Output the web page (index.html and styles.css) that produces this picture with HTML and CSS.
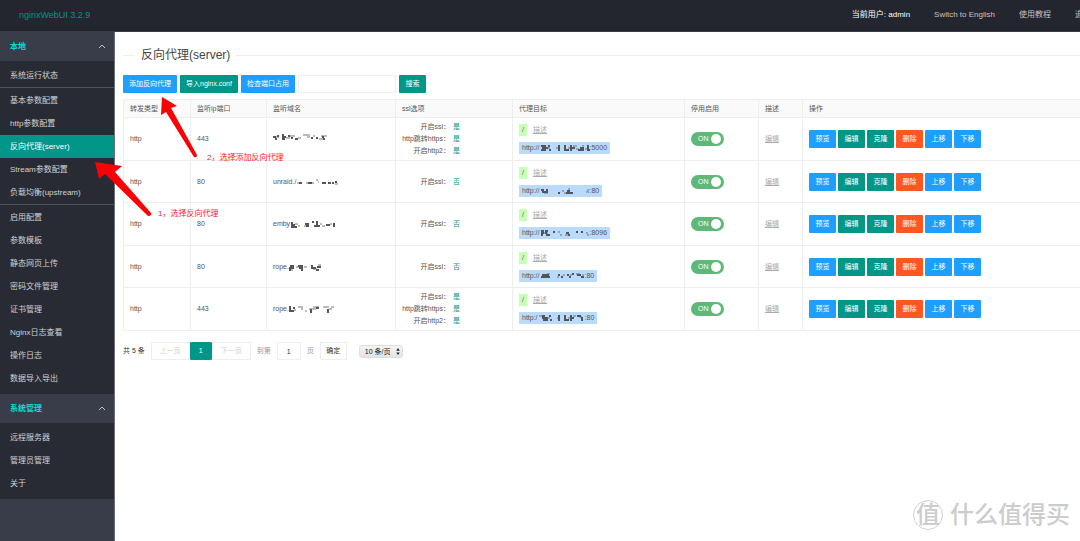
FILE: index.html
```html
<!DOCTYPE html>
<html lang="zh">
<head>
<meta charset="utf-8">
<title>nginxWebUI</title>
<link rel="stylesheet" href="styles.css">
</head>
<body>
<header class="topbar">
  <a class="logo" href="#">nginxWebUI 3.2.9</a>
  <nav class="topnav">
    <a class="user" href="#">当前用户: admin</a>
    <a href="#">Switch to English</a>
    <a href="#">使用教程</a>
    <a href="#">退出登录</a>
  </nav>
</header>
<div class="layout">
  <nav class="sidebar">
    <button class="group">本地<svg class="chevron" viewBox="0 0 8 5"><path d="M1 4l3-3 3 3"/></svg></button>
    <ul class="menu">
      <li><a href="#">系统运行状态</a></li>
      <li class="split"><a href="#">基本参数配置</a></li>
      <li><a href="#">http参数配置</a></li>
      <li><a class="active" href="#">反向代理(server)</a></li>
      <li><a href="#">Stream参数配置</a></li>
      <li><a href="#">负载均衡(upstream)</a></li>
      <li class="split"><a href="#">启用配置</a></li>
      <li><a href="#">参数模板</a></li>
      <li><a href="#">静态网页上传</a></li>
      <li><a href="#">密码文件管理</a></li>
      <li><a href="#">证书管理</a></li>
      <li><a href="#">Nginx日志查看</a></li>
      <li><a href="#">操作日志</a></li>
      <li><a href="#">数据导入导出</a></li>
    </ul>
    <button class="group">系统管理<svg class="chevron" viewBox="0 0 8 5"><path d="M1 4l3-3 3 3"/></svg></button>
    <ul class="menu">
      <li><a href="#">远程服务器</a></li>
      <li><a href="#">管理员管理</a></li>
      <li><a href="#">关于</a></li>
    </ul>
  </nav>
  <main class="content">
    <fieldset class="heading"><legend>反向代理(server)</legend></fieldset>
    <form class="toolbar">
      <button type="button" class="btn blue">添加反向代理</button>
      <button type="button" class="btn teal">导入nginx.conf</button>
      <button type="button" class="btn blue">检查端口占用</button>
      <input class="field search" type="text" aria-label="搜索">
      <button type="button" class="btn teal">搜索</button>
    </form>
    <table class="grid">
      <colgroup><col class="c-type"><col class="c-port"><col class="c-domain"><col class="c-ssl"><col class="c-target"><col class="c-state"><col class="c-desc"><col></colgroup>
      <thead>
        <tr><th>转发类型</th><th>监听ip端口</th><th>监听域名</th><th>ssl选项</th><th>代理目标</th><th>停用启用</th><th>描述</th><th>操作</th></tr>
      </thead>
      <tbody>
        <tr>
          <td>http</td><td>443</td>
          <td><span class="masked"><svg class="mask" width="54" height="8" viewBox="0 0 54 8"><path class="dark" d="M0 4h3M2 6h2M4 3h2M9 2h2M9 4h4M9 6h3M15 3h2M18 5h2M22 6h3M38 5h2M43 5h2M49 4h2M50 6h2"/><path class="pale" d="M3 4h3M13 5h4M17 3h5M25 5h3M30 2h7M34 4h3M40 3h2M46 6h4M48 3h6"/></svg></span></td>
          <td><dl class="ssl"><dt>开启ssl：</dt><dd>是</dd><dt>http跳转https：</dt><dd>是</dd><dt>开启http2：</dt><dd>是</dd></dl></td>
          <td><div class="target"><span class="path">/</span><a class="note" href="#">描述</a></div><div class="target"><span class="url">http://<svg class="mask" width="50" height="8" viewBox="0 0 50 8"><path class="dark" d="M1 2h5M2 4h6M1 6h5M8 2h2M9 6h2M18 2h2M18 4h2M18 6h2M24 2h2M24 4h2M24 6h5M30 2h2M30 4h5M30 6h2M40 4h4M38 6h6M47 2h2M47 4h2M47 6h3"/><path class="pale" d="M6 4h4M16 4h2M28 4h2M33 2h4M36 5h3M42 2h2M45 5h2"/></svg>:5000</span></div></td>
          <td><label class="switch"><input type="checkbox" checked><span>ON</span></label></td>
          <td><a class="note" href="#">编辑</a></td>
          <td><div class="actions"><button class="btn blue">预览</button><button class="btn teal">编辑</button><button class="btn teal">克隆</button><button class="btn red">删除</button><button class="btn blue">上移</button><button class="btn blue">下移</button></div></td>
        </tr>
        <tr>
          <td>http</td><td>80</td>
          <td><span class="masked">unraid./<svg class="mask" width="42" height="8" viewBox="0 0 42 8"><path class="dark" d="M3 5h3M12 5h4M26 5h4M32 5h3M36 5h2M39 4h2"/><path class="pale" d="M1 5h2M10 5h2M16 5h2M20 2h2M22 4h1M39 6h3"/></svg></span></td>
          <td><dl class="ssl"><dt>开启ssl：</dt><dd>否</dd></dl></td>
          <td><div class="target"><span class="path">/</span><a class="note" href="#">描述</a></div><div class="target"><span class="url">http://<svg class="mask" width="50" height="8" viewBox="0 0 50 8"><path class="dark" d="M1 3h3M2 5h6M6 3h2M18 6h2M27 4h3M26 6h7"/><path class="pale" d="M4 6h4M22 4h2M24 6h2M28 2h2M47 3h2M46 5h3"/></svg>:80</span></div></td>
          <td><label class="switch"><input type="checkbox" checked><span>ON</span></label></td>
          <td><a class="note" href="#">编辑</a></td>
          <td><div class="actions"><button class="btn blue">预览</button><button class="btn teal">编辑</button><button class="btn teal">克隆</button><button class="btn red">删除</button><button class="btn blue">上移</button><button class="btn blue">下移</button></div></td>
        </tr>
        <tr>
          <td>http</td><td>80</td>
          <td><span class="masked">emby<svg class="mask" width="46" height="8" viewBox="0 0 46 8"><path class="dark" d="M1 3h2M1 5h4M1 7h6M15 4h4M16 6h3M22 2h2M26 2h2M26 4h2M24 6h6M36 5h4M43 4h2M43 6h2"/><path class="pale" d="M5 4h3M8 6h2M14 6h2M30 4h2M32 6h3M40 4h2"/></svg></span></td>
          <td><dl class="ssl"><dt>开启ssl：</dt><dd>否</dd></dl></td>
          <td><div class="target"><span class="path">/</span><a class="note" href="#">描述</a></div><div class="target"><span class="url">http://<svg class="mask" width="50" height="8" viewBox="0 0 50 8"><path class="dark" d="M1 2h3M1 4h3M1 6h2M5 2h3M5 4h2M6 6h4M13 3h2M26 4h3M28 6h2M36 3h2M41 3h2"/><path class="pale" d="M3 4h5M18 3h2M20 6h2M25 6h3M46 4h2M47 6h2"/></svg>:8096</span></div></td>
          <td><label class="switch"><input type="checkbox" checked><span>ON</span></label></td>
          <td><a class="note" href="#">编辑</a></td>
          <td><div class="actions"><button class="btn blue">预览</button><button class="btn teal">编辑</button><button class="btn teal">克隆</button><button class="btn red">删除</button><button class="btn blue">上移</button><button class="btn blue">下移</button></div></td>
        </tr>
        <tr>
          <td>http</td><td>80</td>
          <td><span class="masked">rope.<svg class="mask" width="33" height="8" viewBox="0 0 33 8"><path class="dark" d="M1 3h4M0 5h5M0 7h2M9 3h5M10 5h4M12 7h2M22 3h2M22 5h5M27 7h3M28 4h4"/><path class="pale" d="M2 7h2M7 4h3M15 4h3M24 6h4M29 2h3"/></svg></span></td>
          <td><dl class="ssl"><dt>开启ssl：</dt><dd>否</dd></dl></td>
          <td><div class="target"><span class="path">/</span><a class="note" href="#">描述</a></div><div class="target"><span class="url">http://<svg class="mask" width="45" height="8" viewBox="0 0 45 8"><path class="dark" d="M2 3h7M1 5h9M18 3h2M21 5h2M27 3h2M29 5h2M32 2h2M37 3h4M41 5h3"/><path class="pale" d="M7 2h3M17 5h2M23 3h2M30 3h2M36 2h4M42 3h2"/></svg>:80</span></div></td>
          <td><label class="switch"><input type="checkbox" checked><span>ON</span></label></td>
          <td><a class="note" href="#">编辑</a></td>
          <td><div class="actions"><button class="btn blue">预览</button><button class="btn teal">编辑</button><button class="btn teal">克隆</button><button class="btn red">删除</button><button class="btn blue">上移</button><button class="btn blue">下移</button></div></td>
        </tr>
        <tr>
          <td>http</td><td>443</td>
          <td><span class="masked">rope.<svg class="mask" width="46" height="8" viewBox="0 0 46 8"><path class="dark" d="M0 2h2M0 4h2M0 6h5M4 3h2M21 5h2M21 7h2M27 3h3M38 5h2M38 7h2"/><path class="pale" d="M5 5h2M9 2h5M12 4h2M16 6h2M20 4h7M24 2h6M34 2h6M40 4h3M42 2h3"/></svg></span></td>
          <td><dl class="ssl"><dt>开启ssl：</dt><dd>是</dd><dt>http跳转https：</dt><dd>是</dd><dt>开启http2：</dt><dd>是</dd></dl></td>
          <td><div class="target"><span class="path">/</span><a class="note" href="#">描述</a></div><div class="target"><span class="url">http:/<svg class="mask" width="47" height="8" viewBox="0 0 47 8"><path class="dark" d="M4 2h3M4 4h6M5 6h5M11 2h2M12 6h2M20 2h2M20 4h2M20 6h2M26 2h2M26 4h2M26 6h5M32 2h2M32 4h4M32 6h2M39 2h4M43 4h2M43 6h2"/><path class="pale" d="M1 2h3M10 4h2M19 4h2M30 4h2M35 2h3M41 3h3"/></svg>:80</span></div></td>
          <td><label class="switch"><input type="checkbox" checked><span>ON</span></label></td>
          <td><a class="note" href="#">编辑</a></td>
          <td><div class="actions"><button class="btn blue">预览</button><button class="btn teal">编辑</button><button class="btn teal">克隆</button><button class="btn red">删除</button><button class="btn blue">上移</button><button class="btn blue">下移</button></div></td>
        </tr>
      </tbody>
    </table>
    <div class="pager">
      <span>共 5 条</span>
      <div class="pages"><button class="page wide" disabled>上一页</button><button class="page current">1</button><button class="page wide" disabled>下一页</button></div>
      <label class="dim" for="goto">到第</label>
      <input class="field goto" id="goto" type="text" value="1">
      <span class="dim">页</span>
      <button class="page ok">确定</button>
      <div class="size">
        <select aria-label="每页条数"><option>10 条/页</option></select>
        <svg viewBox="0 0 4 8"><path d="M0 3l2-3 2 3zM0 5l2 3 2-3z"/></svg>
      </div>
    </div>
  </main>
</div>
<svg class="arrows" width="240" height="240" viewBox="0 0 240 240">
  <path d="M95 162L122 166 115 172 151 213Q152 216 148 216L105 174 99 179Z"/>
  <path d="M162 97L177 106 171 108 197 155Q197 158 194 157L166 112 161 115Z"/>
</svg>
<p class="callout first">1，选择反向代理</p>
<p class="callout second">2，选择添加反向代理</p>
<div class="watermark">
  <span class="seal">值</span><span>什么值得买</span>
</div>
</body>
</html>
```
FILE: styles.css
```css
* { box-sizing: border-box; }
body {
  margin: 0;
  min-height: 100vh;
  display: flex;
  flex-direction: column;
  position: relative;
  overflow: hidden;
  background: #fff;
  color: #555;
  font: 7px/12px "Liberation Sans", "Noto Sans CJK SC", sans-serif;
}
a { color: inherit; text-decoration: none; }
button, input, select { font: inherit; color: inherit; margin: 0; }
button { border: 0; padding: 0; white-space: nowrap; }

.topbar {
  display: flex;
  align-items: center;
  height: 32px;
  padding: 0 0 2px 19px;
  background: #23262e;
  border-bottom: 1px solid #3a3c44;
  overflow: hidden;
  white-space: nowrap;
}
.logo { color: #009688; font-size: 9px; }
.topnav {
  display: flex;
  gap: 24px;
  margin: 0 -27px 0 auto;
  color: #c3c4c6;
  font-size: 8px;
}
.topnav .user { color: #fff; }

.layout { flex: 1; display: flex; }
.sidebar {
  flex: none;
  width: 115px;
  background: #393d49;
  border-right: 1px solid #6c6f78;
  color: #d0d1d3;
  font-size: 8px;
}
.group {
  display: flex;
  align-items: center;
  justify-content: space-between;
  width: 100%;
  height: 29px;
  padding: 0 8px 0 10px;
  background: #393d49;
  color: #13d8d8;
  font-weight: bold;
}
.chevron { width: 8px; height: 5px; fill: none; stroke: #c3c4c6; }
.menu { margin: 0; padding: 3px 0 4px; list-style: none; background: #282b33; }
.menu a { display: block; padding-left: 10px; line-height: 23px; }
.menu .split { border-top: 1px solid #50535a; padding-top: 1px; }
.menu .active { background: #009688; color: #fff; }

.content { flex: 1; min-width: 0; padding: 15px 0 0 8px; }
.heading { margin: 0; padding: 0; border: 0 solid #eee; border-top-width: 1px; }
.heading legend {
  margin-left: 12px;
  padding: 0 6px;
  color: #444;
  font-size: 12px;
  line-height: 16px;
}
.toolbar { display: flex; gap: 3px; margin: 12px 0 6px; }
.btn {
  min-width: 27px;
  height: 18px;
  padding: 0 6px;
  border-radius: 1px;
  color: #fff;
}
.blue { background: #1e9fff; }
.teal { background: #009688; }
.red { background: #ff5722; }
.field { border: 1px solid #eee; border-radius: 1px; background: #fff; outline: 0; }
.search { width: 98px; height: 18px; padding: 0 6px; }

.grid { width: 100%; table-layout: fixed; border-collapse: collapse; }
.c-type { width: 67px; }
.c-port { width: 76px; }
.c-domain { width: 129px; }
.c-ssl { width: 117px; }
.c-target { width: 172px; }
.c-state { width: 74px; }
.c-desc { width: 44px; }
.grid th, .grid td {
  padding: 0 6px;
  border: 1px solid #eee;
  text-align: left;
  font-weight: normal;
  white-space: nowrap;
}
.grid th:last-child, .grid td:last-child { border-right: 0; }
.grid th { height: 18px; background: #fafafa; }
.grid td { height: 42px; }
.grid tr:nth-child(odd) td { height: 43px; }
.masked, .url { display: inline-flex; align-items: center; }
.mask { display: block; fill: none; stroke-width: 2; }
.dark { stroke: #555; }
.pale { stroke: #555; opacity: .4; }
.ssl { display: grid; grid-template-columns: 48px 7px; gap: 0 3px; margin: 0; }
.ssl dt { text-align: right; }
.ssl dd { margin: 0; color: #009688; }
.target { display: flex; gap: 6px; }
.target + .target { margin-top: 6px; }
.path { width: 8px; background: #c8ffb8; text-align: center; }
.url { padding: 0 3px; background: #b8dbff; }
.note { color: #aaa; text-decoration: underline; }
.switch {
  position: relative;
  display: flex;
  align-items: center;
  width: 33px;
  height: 14px;
  padding-left: 7px;
  border-radius: 7px;
  background: #5fb878;
  color: #fff;
}
.switch input { position: absolute; inset: 0; margin: 0; opacity: 0; }
.switch::after {
  content: "";
  position: absolute;
  top: 2px;
  right: 3px;
  width: 10px;
  height: 10px;
  border-radius: 50%;
  background: #fff;
}
.actions { display: flex; gap: 2px; }

.pager { display: flex; align-items: center; gap: 6px; margin-top: 11px; color: #333; }
.pages { display: flex; }
.page { height: 18px; border: 1px solid #eee; background: #fff; }
.page:disabled { color: #d2d2d2; }
.wide { width: 39px; }
.current { width: 22px; border-color: #009688; border-radius: 1px; background: #009688; color: #fff; }
.dim { color: #999; }
.goto { width: 24px; height: 18px; padding: 0; text-align: center; }
.ok { width: 27px; }
.size { position: relative; margin-left: 6px; }
.size select {
  display: block;
  appearance: none;
  width: 44px;
  height: 13px;
  padding: 0 5px;
  border: 1px solid #ddd;
  border-radius: 3px;
  background: linear-gradient(#f4f4f4, #e4e4e4);
  color: #111;
}
.size svg { position: absolute; right: 3px; top: 3px; width: 4px; height: 7px; fill: #222; pointer-events: none; }

.arrows { position: absolute; left: 0; top: 0; fill: #fb0007; pointer-events: none; }
.callout { position: absolute; margin: 0; color: #fb1a1f; font-size: 8px; }
.first { left: 158px; top: 208px; }
.second { left: 207px; top: 152px; }
.watermark {
  position: absolute;
  right: 10px;
  bottom: 10px;
  display: flex;
  align-items: center;
  gap: 7px;
  color: #ccc;
  font-size: 24px;
  font-weight: 500;
  line-height: 32px;
}
.seal {
  width: 30px;
  height: 30px;
  border: 1px solid #d0d0d0;
  border-radius: 50%;
  text-align: center;
  line-height: 27px;
}
```
